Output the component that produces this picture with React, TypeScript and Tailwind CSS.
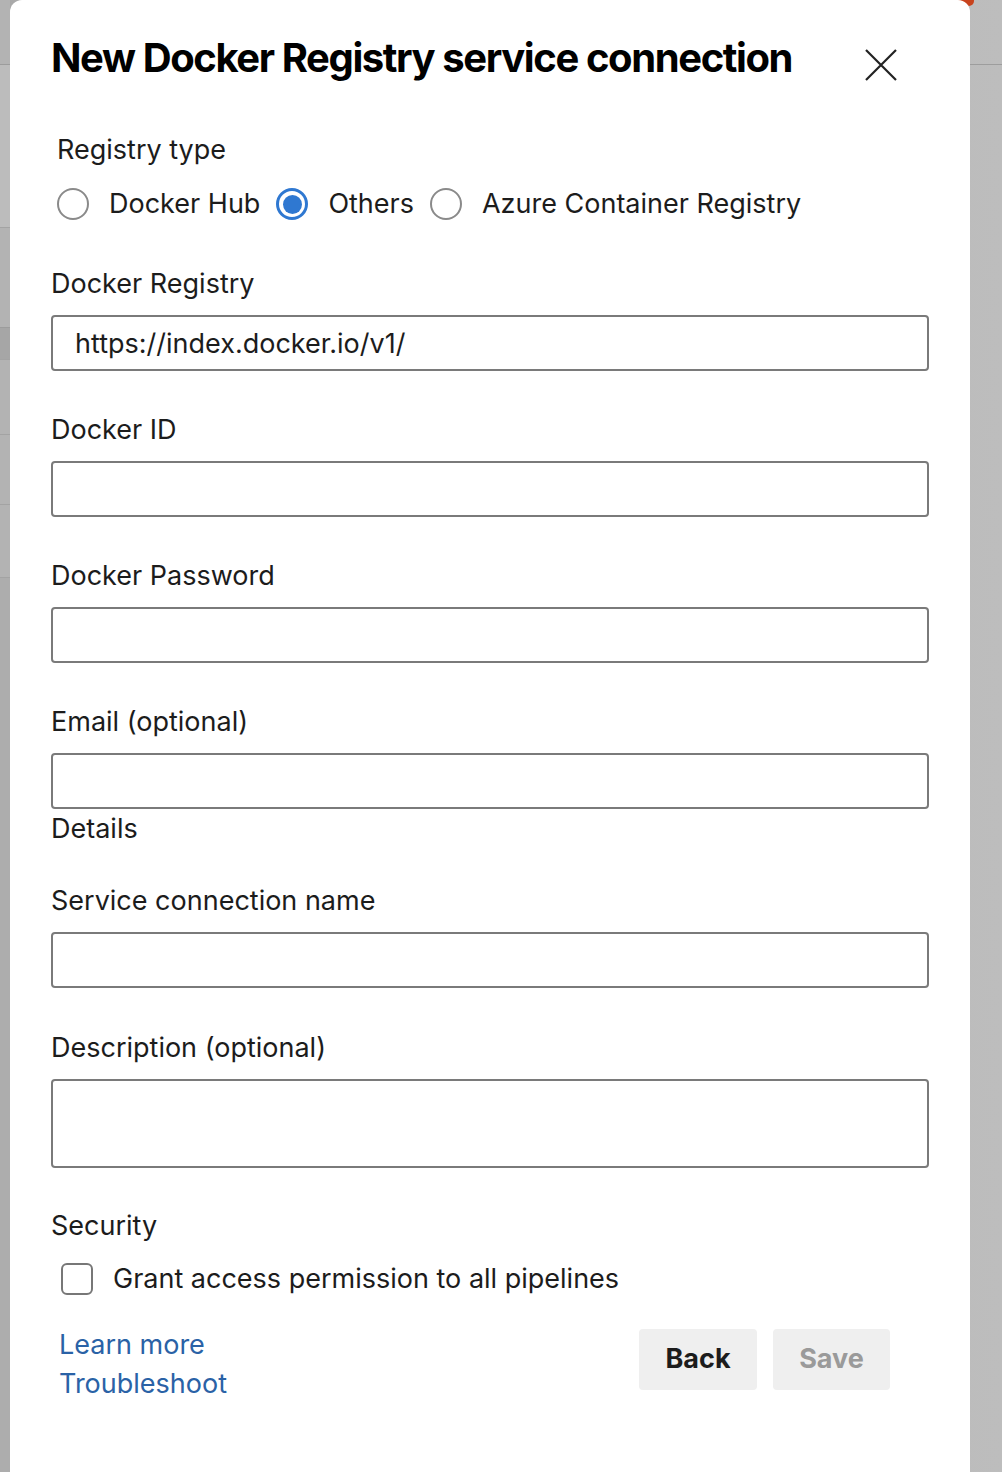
import { useState } from 'react';

type RegistryType = 'hub' | 'others' | 'acr';

const fields = [
  { label: 'Docker ID', value: '' },
  { label: 'Docker Password', value: '' },
  { label: 'Email (optional)', value: '' },
];

function Radio({ checked, label, onClick }: { checked: boolean; label: string; onClick: () => void }) {
  return (
    <button type="button" onClick={onClick} className="flex items-center gap-[20px]">
      {checked ? (
        <span className="flex h-[32px] w-[32px] items-center justify-center rounded-full border-[3px] border-[#2f78d1]">
          <span className="h-[19px] w-[19px] rounded-full bg-[#2f78d1]" />
        </span>
      ) : (
        <span className="h-[32px] w-[32px] rounded-full border-2 border-[#8a8a8a]" />
      )}
      <span className="text-[27px] leading-[32px] text-[#1c1c1c]">{label}</span>
    </button>
  );
}

function TextField({ label, value, className = '' }: { label: string; value: string; className?: string }) {
  return (
    <div className={className}>
      <label className="block pt-[2px] text-[27px] leading-[32px] text-[#1c1c1c]">{label}</label>
      <div className="mt-[15px] flex h-[56px] items-center rounded-[4px] border-2 border-[#7a7a7a] px-[22px] pt-[3px] text-[27px] text-[#1c1c1c]">
        {value}
      </div>
    </div>
  );
}

export default function App() {
  const [registry, setRegistry] = useState<RegistryType>('others');
  const [grant, setGrant] = useState(false);

  return (
    <div
      className="relative flex h-[1472px] w-[1002px] overflow-hidden bg-gradient-to-r from-[#a9a9a9] to-[#bdbdbd]"
      style={{ fontFamily: 'Inter, "Noto Sans", "Liberation Sans", sans-serif' }}
    >
      {/* dimmed page behind the dialog */}
      <div className="flex w-[10px] shrink-0 flex-col bg-[#b3b3b3]">
        <div className="h-[65px] border-b border-[#9c9c9c]" />
        <div className="h-[163px] border-b border-[#a3a3a3] bg-[#bcbcbc]" />
        <div className="h-[100px] border-b border-[#9c9c9c]" />
        <div className="h-[32px] border-b border-[#a3a3a3] bg-[#a6a6a6]" />
        <div className="h-[75px] border-b border-[#a3a3a3]" />
        <div className="h-[70px] border-b border-[#a3a3a3]" />
        <div className="h-[73px] border-b border-[#a3a3a3]" />
        <div className="flex-1 bg-[#adadad]" />
      </div>
      <div className="absolute left-[944px] top-[-4px] h-[10px] w-[30px] rounded-full bg-[#c8431d]" />

      <div className="relative z-10 w-[960px] shrink-0 rounded-t-[12px] bg-white pl-[41px] pr-[41px]">
        <div className="flex items-start justify-between pt-[33px]">
          <h1 className="text-[40px] font-bold leading-[50px] tracking-[-0.035em] text-black">
            New Docker Registry service connection
          </h1>
          <button type="button" className="mr-[32px] mt-[16px] text-[#222]" aria-label="Close">
            <svg width="32" height="32" viewBox="0 0 32 32" fill="none" stroke="currentColor" strokeWidth="2.2">
              <path d="M1 1L31 31M31 1L1 31" />
            </svg>
          </button>
        </div>

        <div className="mt-[51px] pl-[6px] text-[27px] leading-[32px] text-[#1c1c1c]">Registry type</div>
        <div className="mt-[22px] flex items-center gap-[16px] pl-[6px]">
          <Radio checked={registry === 'hub'} label="Docker Hub" onClick={() => setRegistry('hub')} />
          <Radio checked={registry === 'others'} label="Others" onClick={() => setRegistry('others')} />
          <Radio checked={registry === 'acr'} label="Azure Container Registry" onClick={() => setRegistry('acr')} />
        </div>

        <TextField className="mt-[46px]" label="Docker Registry" value="https://index.docker.io/v1/" />
        {fields.map((f) => (
          <TextField key={f.label} className="mt-[41px]" label={f.label} value={f.value} />
        ))}

        <div className="pt-[4px] text-[27px] leading-[32px] text-[#1c1c1c]">Details</div>

        <TextField className="mt-[38px]" label="Service connection name" value="" />

        <div className="mt-[42px]">
          <label className="block pt-[2px] text-[27px] leading-[32px] text-[#1c1c1c]">Description (optional)</label>
          <div className="mt-[15px] h-[89px] rounded-[4px] border-2 border-[#7a7a7a]" />
        </div>

        <div className="mt-[42px] text-[27px] leading-[32px] text-[#1c1c1c]">Security</div>
        <button type="button" onClick={() => setGrant(!grant)} className="mt-[21px] ml-[10px] flex items-center gap-[20px]">
          <span className="flex h-[32px] w-[32px] items-center justify-center rounded-[6px] border-2 border-[#777]">
            {grant && <span className="h-[14px] w-[14px] bg-[#2f78d1]" />}
          </span>
          <span className="text-[27px] leading-[32px] text-[#1c1c1c]">Grant access permission to all pipelines</span>
        </button>

        <div className="mt-[34px] flex items-start justify-between pr-[39px]">
          <div className="flex flex-col gap-[7px] pl-[8px] text-[27px] leading-[32px] text-[#2a62a6]">
            <a href="#">Learn more</a>
            <a href="#">Troubleshoot</a>
          </div>
          <div className="flex gap-[16px]">
            <button type="button" className="h-[61px] w-[118px] rounded-[4px] bg-[#efefef] text-[27px] font-bold text-[#1c1c1c]">
              Back
            </button>
            <button type="button" disabled className="h-[61px] w-[117px] rounded-[4px] bg-[#efefef] text-[27px] font-bold text-[#9a9a9a]">
              Save
            </button>
          </div>
        </div>
      </div>

      <div className="flex flex-1 flex-col">
        <div className="h-[65px] border-b border-[#9d9d9d]" />
      </div>
    </div>
  );
}
